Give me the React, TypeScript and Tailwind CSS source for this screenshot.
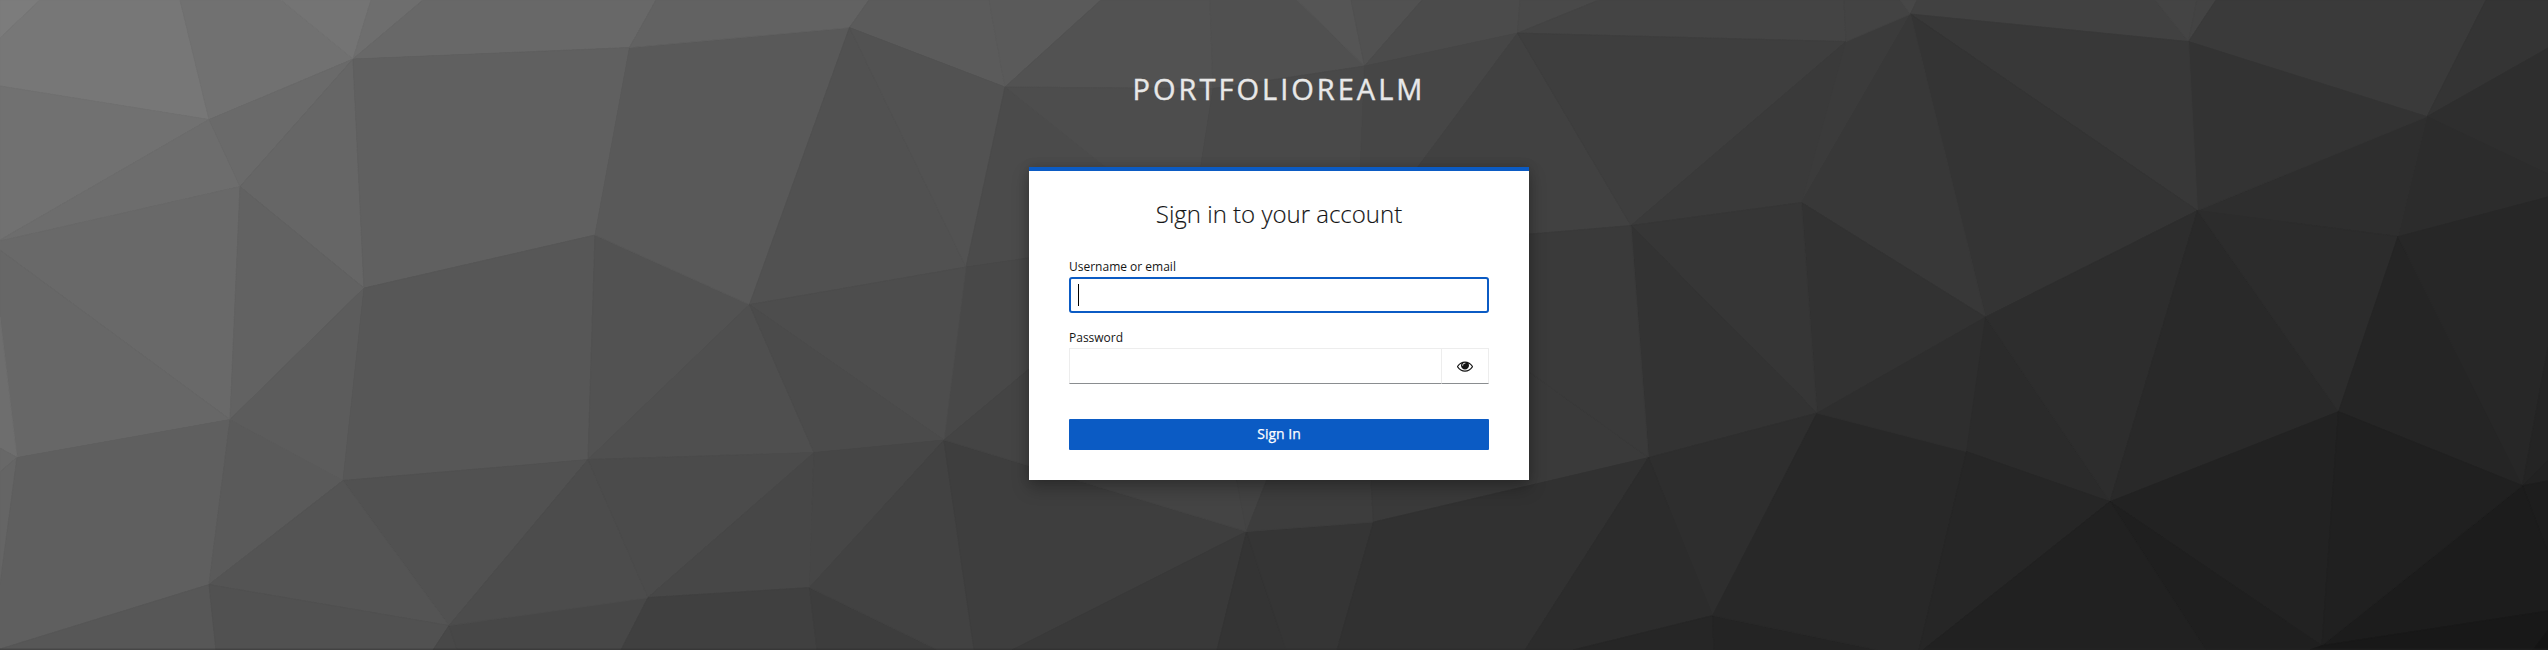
type Point = [number, number];

/* Mesh vertices: interior points by name, edge points by their side and offset. */
const V: Record<string, Point> = {
  B: [209, 119], C: [353, 58.5], D: [240, 186], E: [364, 287.5], F: [629.5, 47],
  G: [595, 234.5], H: [749.5, 304], J: [230, 419], K: [17, 457], L: [343, 480],
  M: [209, 584], N: [449, 625], O: [588, 459], Q: [814, 452], R: [944, 439.5],
  S: [648, 597], T: [809.5, 587], U: [1631, 225], W: [1373.5, 521.5], X: [1648.5, 457],
  Y: [1712.5, 615], Z: [1817, 412.5], X0: [1246.5, 531],
  a: [2110, 501], b: [1966.5, 451], c: [1985.5, 316.5], d: [1801.5, 202], e: [1846, 41],
  f: [1910.5, 13.5], g: [2188.5, 41], h: [2197.5, 210], i: [2427, 116], j: [2398, 236],
  k: [2338.5, 411], m: [2522.5, 485], n: [2322, 645], p: [1517.5, 32.5], q: [1364.5, 65.5],
  r: [1213, 88], s: [1005, 86.5], t: [849.5, 27], u: [966, 266.5], v: [1190, 234], w: [1357, 248],
};

const at = (key: string): Point => {
  const side = key[0];
  const offset = Number(key.slice(1));
  if (key.length > 1 && side === "^") return [offset, 0];
  if (key.length > 1 && side === "_") return [offset, 650];
  if (key.length > 1 && side === "<") return [0, offset];
  if (key.length > 1 && side === ">") return [2548, offset];
  return [V[key][0], V[key][1] + 0.6];
};

const FACETS: [string, string][] = [
  ["<0 ^40 <38", "#7c7c7c"],
  ["^40 ^180 B <86 <38", "#777777"],
  ["^180 ^281 C B", "#717171"],
  ["^281 ^371 C", "#747474"],
  ["^371 ^423 C", "#6e6e6e"],
  ["^423 ^656 F C", "#686868"],
  ["<86 B <240", "#717171"],
  ["<240 B D <241", "#6d6d6d"],
  ["B C D", "#6a6a6a"],
  ["C E D", "#666666"],
  ["C F G E", "#606060"],
  ["<241 D J <250", "#696969"],
  ["<250 J K <317", "#676767"],
  ["D E J", "#626262"],
  ["<317 K <448", "#6e6e6e"],
  ["<448 K <472", "#686868"],
  ["<472 K <585", "#656565"],
  ["K J M <649 <585", "#5f5f5f"],
  ["J L M", "#5a5a5a"],
  ["J E L", "#5c5c5c"],
  ["E G O L", "#575757"],
  ["L O N", "#515151"],
  ["L N M", "#545454"],
  ["M <649 _0 _216", "#575757"],
  ["M N _433 _216", "#515151"],
  ["N _433 _457", "#484848"],
  ["N S _621 _457", "#474747"],
  ["O S N", "#4c4c4c"],
  ["G H O", "#525252"],
  ["F t H G", "#595959"],
  ["F ^656 ^869 t", "#626262"],
  ["t ^869 ^989 s", "#5b5b5b"],
  ["s ^989 ^1101", "#5a5a5a"],
  ["s ^1101 ^1210 r", "#525252"],
  ["t u H", "#515151"],
  ["t s u", "#525252"],
  ["s v u", "#4b4b4b"],
  ["s r v", "#4d4d4d"],
  ["u v R", "#484848"],
  ["H u R", "#4d4d4d"],
  ["O H Q", "#4f4f4f"],
  ["H R Q", "#4b4b4b"],
  ["O Q S", "#4b4b4b"],
  ["Q T S", "#474747"],
  ["Q R T", "#464646"],
  ["S T _817 _621", "#404040"],
  ["T _938 _817", "#3d3d3d"],
  ["T R _974 _938", "#424242"],
  ["R X0 _1012 _974", "#3e3e3e"],
  ["X0 _1217 _1012", "#393939"],
  ["X0 _1217 _1286", "#343434"],
  ["X0 W _1337 _1286", "#353535"],
  ["R v X0", "#444444"],
  ["v w X0", "#434343"],
  ["w W X0", "#3d3d3d"],
  ["w X W", "#3a3a3a"],
  ["W X _1525 _1337", "#313131"],
  ["r ^1210 ^1297 q", "#505050"],
  ["q ^1297 ^1351", "#555555"],
  ["q ^1351 ^1422", "#515151"],
  ["q ^1422 ^1520 p", "#4b4b4b"],
  ["p ^1520 ^1599", "#494949"],
  ["p ^1599 ^1844 e", "#444444"],
  ["r q w v", "#494949"],
  ["q p w", "#464646"],
  ["p U w", "#414141"],
  ["p e U", "#3e3e3e"],
  ["U e d", "#3a3a3a"],
  ["e f d", "#3b3b3b"],
  ["e ^1844 ^1900 f", "#434343"],
  ["f ^1900 ^1917", "#474747"],
  ["f ^1917 ^2155 g", "#414141"],
  ["g ^2155 ^2197", "#444444"],
  ["g ^2197 ^2216", "#434343"],
  ["g ^2216 ^2486 i", "#3a3a3a"],
  ["i ^2486 ^2548 >48", "#343434"],
  ["i >48 >174", "#2e2e2e"],
  ["i >174 >197 j", "#2c2c2c"],
  ["i j h", "#2e2e2e"],
  ["g i h", "#333333"],
  ["f g h", "#383838"],
  ["f h c", "#343434"],
  ["f c d", "#383838"],
  ["d c Z", "#323232"],
  ["U d Z", "#363636"],
  ["U Z X", "#333333"],
  ["w U X", "#3a3a3a"],
  ["X Z Y", "#2e2e2e"],
  ["X Y _1573 _1525", "#2c2c2c"],
  ["Y _1573 _1714", "#262626"],
  ["Y _1714 _1878", "#242424"],
  ["Z b _1919 _1878 Y", "#282828"],
  ["Z c b", "#2e2e2e"],
  ["c a b", "#2b2b2b"],
  ["c h a", "#2d2d2d"],
  ["b a _1923 _1919", "#262626"],
  ["h k a", "#292929"],
  ["h j k", "#2c2c2c"],
  ["j m k", "#252525"],
  ["j >197 >347 m", "#272727"],
  ["m >347 >460", "#242424"],
  ["m >460 >481", "#222222"],
  ["m >481 >553", "#1d1d1d"],
  ["m >553 >611 n", "#1c1c1c"],
  ["a k n", "#222222"],
  ["k m n", "#202020"],
  ["a n _2310 _2206", "#1f1f1f"],
  ["a _1923 _2206", "#212121"],
  ["n >611 >630 _2533 _2310", "#181818"],
  [">630 >650 _2533", "#141414"],
];

function Backdrop() {
  return (
    <svg
      className="col-start-1 row-start-1 h-[650px] w-full"
      viewBox="0 0 2548 650"
      preserveAspectRatio="xMidYMin slice"
      aria-hidden="true"
    >
      {FACETS.map(([keys, color]) => (
        <polygon
          key={keys}
          points={keys.split(" ").map((k) => at(k).join(",")).join(" ")}
          fill={color}
          stroke={color}
          strokeWidth={0.8}
        />
      ))}
      <rect x="0" y="648.5" width="2548" height="1.5" fill="#292729" opacity="0.35" />
    </svg>
  );
}

function EyeIcon() {
  return (
    <svg className="h-4 w-4" viewBox="0 0 1792 1792" fill="currentColor" aria-hidden="true">
      <path d="M1664 960q-152-236-381-353 61 104 61 225 0 185-131.5 316.5t-316.5 131.5-316.5-131.5-131.5-316.5q0-121 61-225-229 117-381 353 133 205 333.5 326.5t434.5 121.5 434.5-121.5 333.5-326.5zm-720-384q0-20-14-34t-34-14q-125 0-214.5 89.5t-89.5 214.5q0 20 14 34t34 14 34-14 14-34q0-86 61-147t147-61q20 0 34-14t14-34zm848 384q0 34-20 69-140 230-376.5 368.5t-499.5 138.5-499.5-139-376.5-368q-20-35-20-69t20-69q140-229 376.5-368t499.5-139 499.5 139 376.5 368q20 35 20 69z" />
    </svg>
  );
}

export default function App() {
  return (
    <div className="grid h-[650px] w-full grid-cols-1 overflow-hidden bg-[#3a3a3a] font-['Open_Sans',sans-serif] text-[#151515]">
      <Backdrop />
      <div className="z-10 col-start-1 row-start-1 flex flex-col items-center pl-[10px]">
        <header className="mt-[62px] h-[105px] text-center text-[29px] leading-[54px] tracking-[3px] text-[#e8e8e8] uppercase [-webkit-text-stroke:0.4px_#e8e8e8]">
          PortfolioRealm
        </header>
        <main className="h-[313px] w-[500px] border-t-4 border-[#0b5bc4] bg-white px-10 shadow-[0_8px_16px_0_rgba(3,3,3,0.25),0_0_10px_0_rgba(3,3,3,0.15)]">
          <h1 className="mt-[27px] text-center text-2xl leading-[31px] font-light [-webkit-text-stroke:0.15px_#151515]">
            Sign in to your account
          </h1>
          <form className="mt-[29px] flex flex-col">
            <label className="text-xs leading-[18px]">Username or email</label>
            <div className="mt-px flex h-9 items-center rounded-[3px] border-2 border-[#0b5bc4] pl-[7px]">
              <span className="h-[22px] w-px bg-black" />
            </div>
            <label className="mt-4 mb-px text-xs leading-[18px]">Password</label>
            <div className="flex h-9">
              <div className="h-full flex-1 border border-[#ededed] border-b-[#8a8d90]" />
              <button
                type="button"
                aria-label="Show password"
                className="flex h-full w-[47px] items-center justify-center border border-l-0 border-[#ededed] border-b-[#8a8d90]"
              >
                <EyeIcon />
              </button>
            </div>
            <button
              type="button"
              className="mt-[35px] h-[31px] rounded-[1px] bg-[#0b5bc4] pb-0.5 text-sm leading-[29px] font-medium text-white [-webkit-text-stroke:0.25px_#ffffff]"
            >
              Sign In
            </button>
          </form>
        </main>
      </div>
    </div>
  );
}
